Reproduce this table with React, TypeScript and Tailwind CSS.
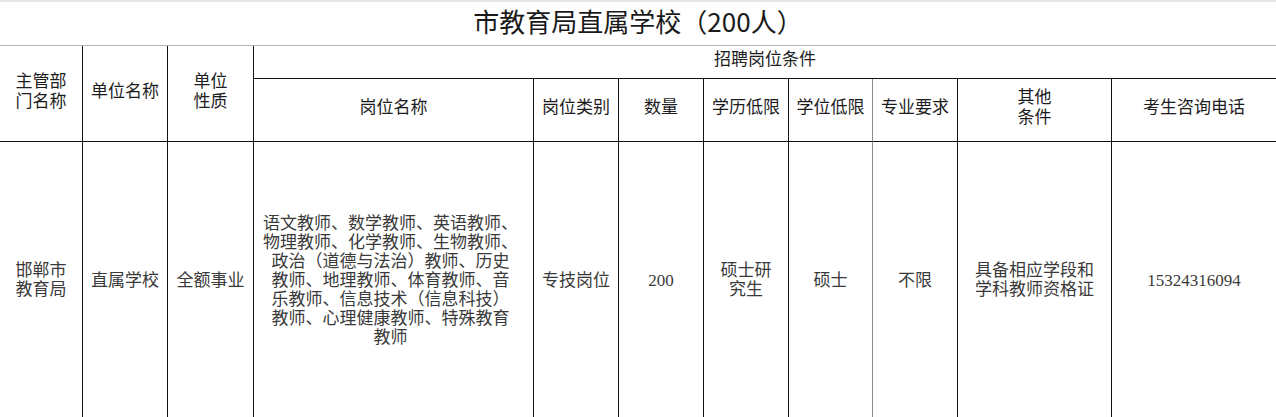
import React from "react";

const sans = { fontFamily: '"Liberation Sans", "Noto Sans CJK SC", sans-serif' };
const titleFont = { fontFamily: '"Noto Sans CJK SC", "Noto Sans", sans-serif' };
const serif = { fontFamily: '"Liberation Serif", "Noto Sans CJK SC", serif' };

function H({ children, className = "" }: { children: React.ReactNode; className?: string }) {
  return (
    <div
      className={`flex items-center justify-center text-center text-[17px] leading-[20px] text-[#1c1c1c] border-b border-[#111] pb-[4px] ${className}`}
      style={sans}
    >
      <div>{children}</div>
    </div>
  );
}

function D({ children, className = "" }: { children: React.ReactNode; className?: string }) {
  return (
    <div
      className={`flex items-center justify-center text-center text-[17px] leading-[19px] text-[#3a3a3a] ${className}`}
      style={serif}
    >
      <div className="whitespace-nowrap">{children}</div>
    </div>
  );
}

export default function App() {
  return (
    <div className="w-[1276px] h-[417px] overflow-hidden bg-white">
      <div className="grid grid-cols-[82px_85px_86px_280px_85px_85px_85px_84px_85px_154px_165px] grid-rows-[46px_33px_63px_276px]">
        <div
          className="col-span-11 flex items-center justify-center border-t-2 border-b border-t-[#e6e6e6] border-b-[#b4b4b4] text-[26px] leading-[32px] text-[#1a1a1a] pb-[6px]"
          style={titleFont}
        >
          市教育局直属学校（200人）
        </div>

        <H className="row-span-2">
          主管部
          <br />
          门名称
        </H>
        <H className="row-span-2 border-l">单位名称</H>
        <H className="row-span-2 border-l">
          单位
          <br />
          性质
        </H>
        <H className="col-span-8 border-l">招聘岗位条件</H>

        <H className="border-l">岗位名称</H>
        <H className="border-l">岗位类别</H>
        <H className="border-l">数量</H>
        <H className="border-l">学历低限</H>
        <H className="border-l">学位低限</H>
        <H className="border-l border-l-[#8a8a8a]">专业要求</H>
        <H className="border-l">
          其他
          <br />
          条件
        </H>
        <H className="border-l">考生咨询电话</H>

        <D>
          邯郸市
          <br />
          教育局
        </D>
        <D className="border-l border-[#111]">直属学校</D>
        <D className="border-l border-[#111]">全额事业</D>
        <D className="border-l border-[#111] pr-[6px]">
          语文教师、数学教师、英语教师、
          <br />
          物理教师、化学教师、生物教师、
          <br />
          政治（道德与法治）教师、历史
          <br />
          教师、地理教师、体育教师、音
          <br />
          乐教师、信息技术（信息科技）
          <br />
          教师、心理健康教师、特殊教育
          <br />
          教师
        </D>
        <D className="border-l border-[#111]">专技岗位</D>
        <D className="border-l border-[#111] text-[15px]">200</D>
        <D className="border-l border-[#111]">
          硕士研
          <br />
          究生
        </D>
        <D className="border-l border-[#111]">硕士</D>
        <D className="border-l border-[#8a8a8a]">不限</D>
        <D className="border-l border-[#111]">
          具备相应学段和
          <br />
          学科教师资格证
        </D>
        <D className="border-l border-[#111] text-[15px]">15324316094</D>
      </div>
    </div>
  );
}
